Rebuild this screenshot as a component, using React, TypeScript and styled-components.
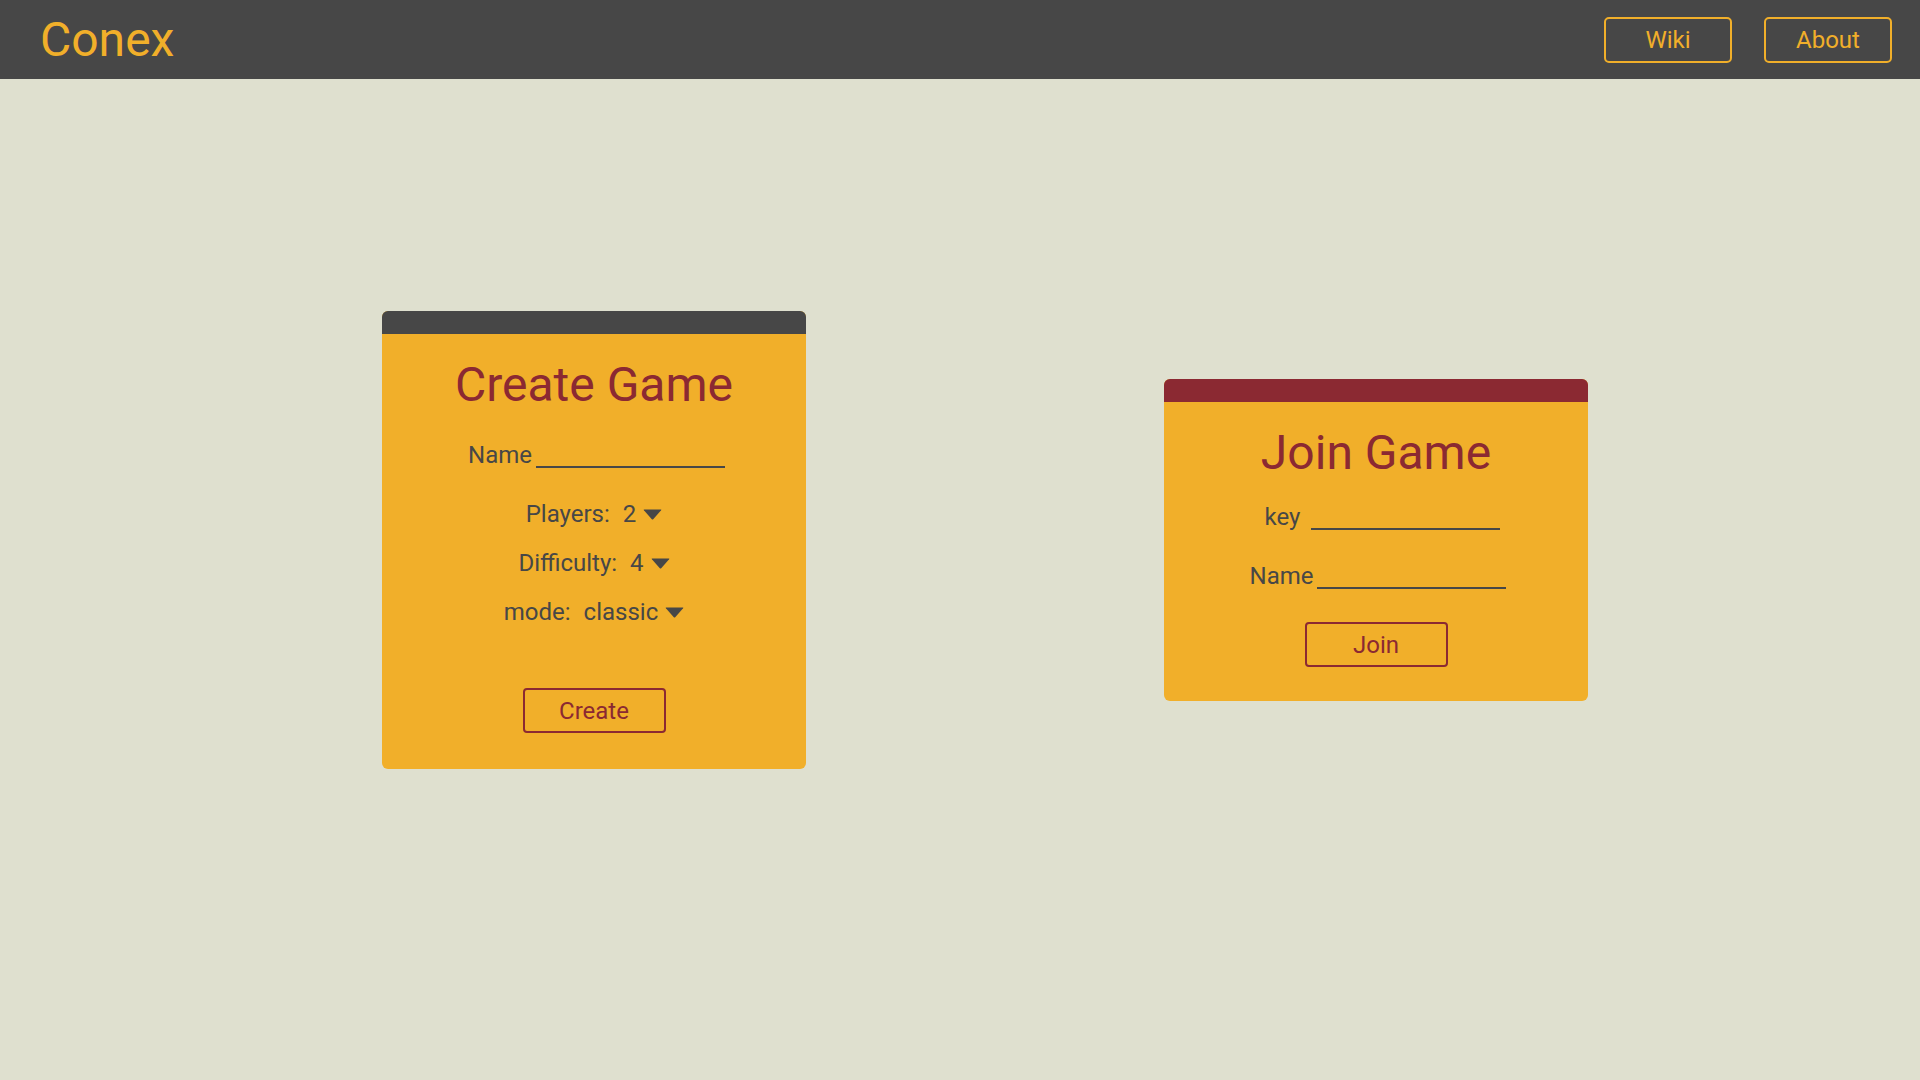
import React from "react";
import styled, { createGlobalStyle } from "styled-components";

const GlobalStyle = createGlobalStyle`
  html, body {
    margin: 0;
    padding: 0;
    background: #dfe0cf;
    font-family: Roboto, "Liberation Sans", sans-serif;
  }
  * { box-sizing: border-box; }
`;

const ORANGE = "#f1af2a";
const RED = "#8b2932";
const GREY = "#474747";

const Header = styled.header`
  height: 79px;
  background: ${GREY};
  display: flex;
  align-items: center;
  justify-content: space-between;
  padding: 0 28px 0 40px;
`;

const Logo = styled.div`
  color: ${ORANGE};
  font-size: 48px;
  line-height: 56px;
`;

const Nav = styled.nav`
  display: flex;
  gap: 32px;
`;

const NavButton = styled.button`
  width: 128px;
  height: 46px;
  border: 2px solid ${ORANGE};
  border-radius: 5px;
  background: transparent;
  color: ${ORANGE};
  font-family: Roboto, "Liberation Sans", sans-serif;
  font-size: 24px;
  line-height: 28px;
  padding: 0;
  cursor: pointer;
`;

const Main = styled.main`
  height: calc(100vh - 79px);
  padding: 0 0 79px 50px;
  display: flex;
  align-items: center;
  justify-content: center;
  gap: 358px;
`;

const Card = styled.section`
  width: 424px;
  border-radius: 6px;
  overflow: hidden;
  background: ${ORANGE};
`;

const CardBar = styled.div<{ $color: string }>`
  height: 23px;
  background: ${(p) => p.$color};
`;

const CardBody = styled.div<{ $bottom: number }>`
  display: flex;
  flex-direction: column;
  align-items: center;
  padding: 23px 0 ${(p) => p.$bottom}px;
`;

const Title = styled.h2`
  margin: 0;
  color: ${RED};
  font-size: 48px;
  line-height: 56px;
  font-weight: 400;
`;

const Row = styled.div<{ $top: number; $align?: string; $indent?: number }>`
  display: flex;
  align-items: ${(p) => p.$align || "center"};
  justify-content: center;
  margin-top: ${(p) => p.$top}px;
  padding-left: ${(p) => p.$indent ?? 0}px;
  height: 28px;
  color: ${GREY};
  font-size: 24px;
  line-height: 28px;
`;

const Label = styled.label<{ $gap?: number }>`
  margin-right: ${(p) => p.$gap ?? 0}px;
`;

const LineInput = styled.input`
  width: 189px;
  height: 23px;
  padding: 0;
  border: none;
  border-bottom: 2px solid ${GREY};
  background: transparent;
  font-family: Roboto, "Liberation Sans", sans-serif;
  font-size: 24px;
  color: ${GREY};
  outline: none;
`;

const Select = styled.div`
  display: inline-flex;
  align-items: center;
  gap: 7px;
  margin-left: 13px;
  cursor: pointer;
`;

const Arrow = styled.svg`
  width: 19px;
  height: 11px;
  display: block;
`;

const ActionButton = styled.button<{ $top: number }>`
  margin-top: ${(p) => p.$top}px;
  width: 143px;
  height: 45px;
  border: 2px solid ${RED};
  border-radius: 4px;
  background: transparent;
  color: ${RED};
  font-family: Roboto, "Liberation Sans", sans-serif;
  font-size: 24px;
  line-height: 28px;
  padding: 0;
  cursor: pointer;
`;

const DropArrow = () => (
  <Arrow viewBox="0 0 19 11">
    <path d="M1.2 0.5 H17.8 Q18.8 0.5 18.1 1.3 L10.2 10.2 Q9.5 10.9 8.8 10.2 L0.9 1.3 Q0.2 0.5 1.2 0.5 Z" fill={GREY} />
  </Arrow>
);

const SelectRow = ({ label, value, top }: { label: string; value: string; top: number }) => (
  <Row $top={top}>
    <Label>{label}</Label>
    <Select>
      <span>{value}</span>
      <DropArrow />
    </Select>
  </Row>
);

export default function App() {
  return (
    <>
      <GlobalStyle />
      <Header>
        <Logo>Conex</Logo>
        <Nav>
          <NavButton>Wiki</NavButton>
          <NavButton>About</NavButton>
        </Nav>
      </Header>
      <Main>
        <Card>
          <CardBar $color={GREY} />
          <CardBody $bottom={36}>
            <Title>Create Game</Title>
            <Row $top={28} $align="baseline" $indent={5}>
              <Label $gap={4}>Name</Label>
              <LineInput />
            </Row>
            <SelectRow label="Players:" value="2" top={31} />
            <SelectRow label="Difficulty:" value="4" top={21} />
            <SelectRow label="mode:" value="classic" top={21} />
            <ActionButton $top={62}>Create</ActionButton>
          </CardBody>
        </Card>
        <Card>
          <CardBar $color={RED} />
          <CardBody $bottom={34}>
            <Title>Join Game</Title>
            <Row $top={22} $align="baseline" $indent={13}>
              <Label $gap={11}>key</Label>
              <LineInput />
            </Row>
            <Row $top={31} $align="baseline" $indent={4}>
              <Label $gap={4}>Name</Label>
              <LineInput />
            </Row>
            <ActionButton $top={32}>Join</ActionButton>
          </CardBody>
        </Card>
      </Main>
    </>
  );
}
